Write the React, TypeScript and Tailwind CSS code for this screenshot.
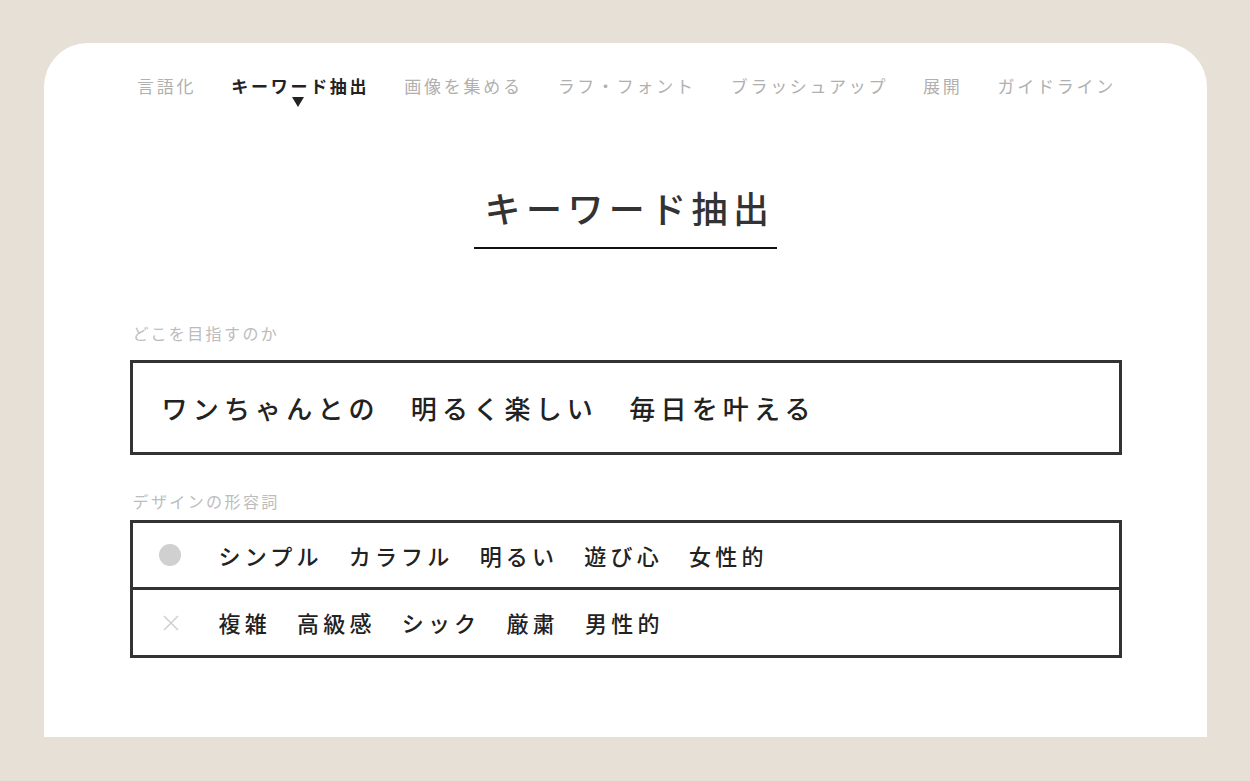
const NAV = ['言語化', 'キーワード抽出', '画像を集める', 'ラフ・フォント', 'ブラッシュアップ', '展開', 'ガイドライン']

const font = { fontFamily: '"Noto Sans CJK JP", "Noto Sans", sans-serif' }

export default function App() {
  return (
    <div className="w-[1250px] h-[781px] bg-[#e7e0d6] pt-[43px] pl-[44px]" style={font}>
      <div className="w-[1163px] h-[694px] bg-white rounded-t-[44px] flex flex-col items-center">
        <nav className="flex items-center gap-[35px] mt-[28px] h-[30px] pl-[2px]">
          {NAV.map((item, i) => (
            <div key={item} className="relative">
              <span
                className={`text-[17px] tracking-[0.16em] ${
                  i === 1 ? 'text-[#222] font-bold' : 'text-[#b0b0b0] font-normal'
                }`}
              >
                {item}
              </span>
              {i === 1 && (
                <span className="absolute left-[61px] top-[24px] w-0 h-0 border-l-[6px] border-r-[6px] border-t-[10px] border-l-transparent border-r-transparent border-t-[#222]" />
              )}
            </div>
          ))}
        </nav>

        <div className="mt-[81px] flex flex-col items-center">
          <h1 className="text-[36px] leading-[50px] font-medium text-[#333] tracking-[0.15em] pl-[8px]">キーワード抽出</h1>
          <div className="w-[303px] h-[2px] bg-[#111] mt-[15px]" />
        </div>

        <div className="w-[992px] mt-[72px]">
          <p className="text-[16px] text-[#bcbcbc] tracking-[0.15em] pl-[3px]">どこを目指すのか</p>
          <div className="mt-[15px] h-[95px] border-[3px] border-[#333] flex items-center px-[29px]">
            <span className="text-[26px] font-medium text-[#222] tracking-[0.2em] whitespace-pre">
              ワンちゃんとの　明るく楽しい　毎日を叶える
            </span>
          </div>

          <p className="mt-[34px] text-[16px] text-[#bcbcbc] tracking-[0.15em] pl-[3px]">デザインの形容詞</p>
          <div className="mt-[7px] border-[3px] border-[#333]">
            <div className="h-[67px] flex items-center border-b-[3px] border-[#333]">
              <span className="w-[22px] h-[22px] rounded-full bg-[#d0d0d0] ml-[26px]" />
              <span className="ml-[38px] text-[22px] font-medium text-[#222] tracking-[0.19em] whitespace-pre">
                シンプル　カラフル　明るい　遊び心　女性的
              </span>
            </div>
            <div className="h-[65px] flex items-center">
              <svg className="ml-[29px]" width="18" height="18" viewBox="0 0 18 18">
                <path d="M2 2 L16 16 M16 2 L2 16" stroke="#cfcfcf" strokeWidth="1.5" fill="none" />
              </svg>
              <span className="ml-[39px] text-[22px] font-medium text-[#222] tracking-[0.19em] whitespace-pre">
                複雑　高級感　シック　厳粛　男性的
              </span>
            </div>
          </div>
        </div>
      </div>
    </div>
  )
}
